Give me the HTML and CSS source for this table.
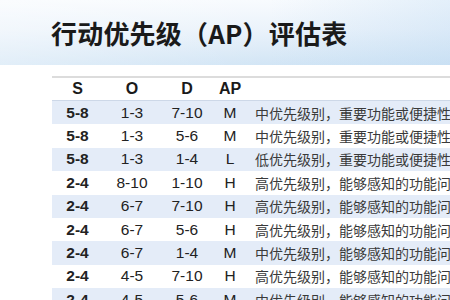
FILE: index.html
```html
<!DOCTYPE html>
<html lang="zh">
<head>
<meta charset="utf-8">
<title>行动优先级（AP）评估表</title>
<link rel="stylesheet" href="styles.css">
</head>
<body>
<div class="page">
  <header class="band">
    <h1 class="title">行动优先级（AP）评估表</h1>
  </header>
  <div class="table">
    <div class="row head">
      <div class="c">S</div><div class="c">O</div><div class="c">D</div><div class="c">AP</div><div class="desc"></div>
    </div>
    <div class="row alt">
      <div class="c b">5-8</div><div class="c">1-3</div><div class="c">7-10</div><div class="c">M</div><div class="desc">中优先级别，重要功能或便捷性问题</div>
    </div>
    <div class="row">
      <div class="c b">5-8</div><div class="c">1-3</div><div class="c">5-6</div><div class="c">M</div><div class="desc">中优先级别，重要功能或便捷性问题</div>
    </div>
    <div class="row alt">
      <div class="c b">5-8</div><div class="c">1-3</div><div class="c">1-4</div><div class="c">L</div><div class="desc">低优先级别，重要功能或便捷性问题</div>
    </div>
    <div class="row">
      <div class="c b">2-4</div><div class="c">8-10</div><div class="c">1-10</div><div class="c">H</div><div class="desc">高优先级别，能够感知的功能问题</div>
    </div>
    <div class="row alt">
      <div class="c b">2-4</div><div class="c">6-7</div><div class="c">7-10</div><div class="c">H</div><div class="desc">高优先级别，能够感知的功能问题</div>
    </div>
    <div class="row">
      <div class="c b">2-4</div><div class="c">6-7</div><div class="c">5-6</div><div class="c">H</div><div class="desc">高优先级别，能够感知的功能问题</div>
    </div>
    <div class="row alt">
      <div class="c b">2-4</div><div class="c">6-7</div><div class="c">1-4</div><div class="c">M</div><div class="desc">中优先级别，能够感知的功能问题</div>
    </div>
    <div class="row">
      <div class="c b">2-4</div><div class="c">4-5</div><div class="c">7-10</div><div class="c">H</div><div class="desc">高优先级别，能够感知的功能问题</div>
    </div>
    <div class="row alt">
      <div class="c b">2-4</div><div class="c">4-5</div><div class="c">5-6</div><div class="c">M</div><div class="desc">中优先级别，能够感知的功能问题</div>
    </div>
  </div>
</div>
</body>
</html>
```

FILE: styles.css
```css
html, body {
  margin: 0;
  padding: 0;
  background: #ffffff;
}
.page {
  width: 450px;
  height: 300px;
  overflow: hidden;
  font-family: "Liberation Sans", "Noto Sans CJK SC", sans-serif;
}
.band {
  height: 65px;
  display: flex;
  align-items: center;
  padding-left: 51px;
  background: linear-gradient(180deg, #f8fbfe 0%, #ebf3fb 45%, #d2e5f5 100%);
  position: relative;
}
.band::after {
  content: "";
  position: absolute;
  inset: 0;
  background: linear-gradient(90deg, rgba(255,255,255,0.35) 0%, rgba(255,255,255,0) 60%, rgba(180,212,240,0.3) 100%);
}
.title {
  margin: 0;
  font-family: "Noto Sans CJK SC", sans-serif;
  font-weight: 700;
  font-size: 26px;
  color: #1a1a1a;
  letter-spacing: 0.2px;
  position: relative;
  z-index: 1;
}
.table {
  margin-top: 11px;
  margin-left: 52px;
  border-top: 2px solid #dcdcdc;
}
.row {
  display: grid;
  grid-template-columns: 51px 58px 52px 34px 1fr;
  height: 23.4px;
  align-items: center;
  font-size: 15.5px;
  color: #222222;
}
.row.head {
  height: 22px;
  border-bottom: 1px solid #cdd8e8;
  font-size: 16px;
  font-weight: 700;
  color: #1a1a1a;
}
.row.alt {
  background: #e4ecf8;
}
.c {
  text-align: center;
  white-space: nowrap;
}
.b {
  font-weight: 700;
}
.desc {
  padding-left: 8px;
  font-family: "Noto Sans CJK SC", sans-serif;
  font-size: 14px;
  color: #3a3a3a;
  white-space: nowrap;
  overflow: hidden;
}
```
